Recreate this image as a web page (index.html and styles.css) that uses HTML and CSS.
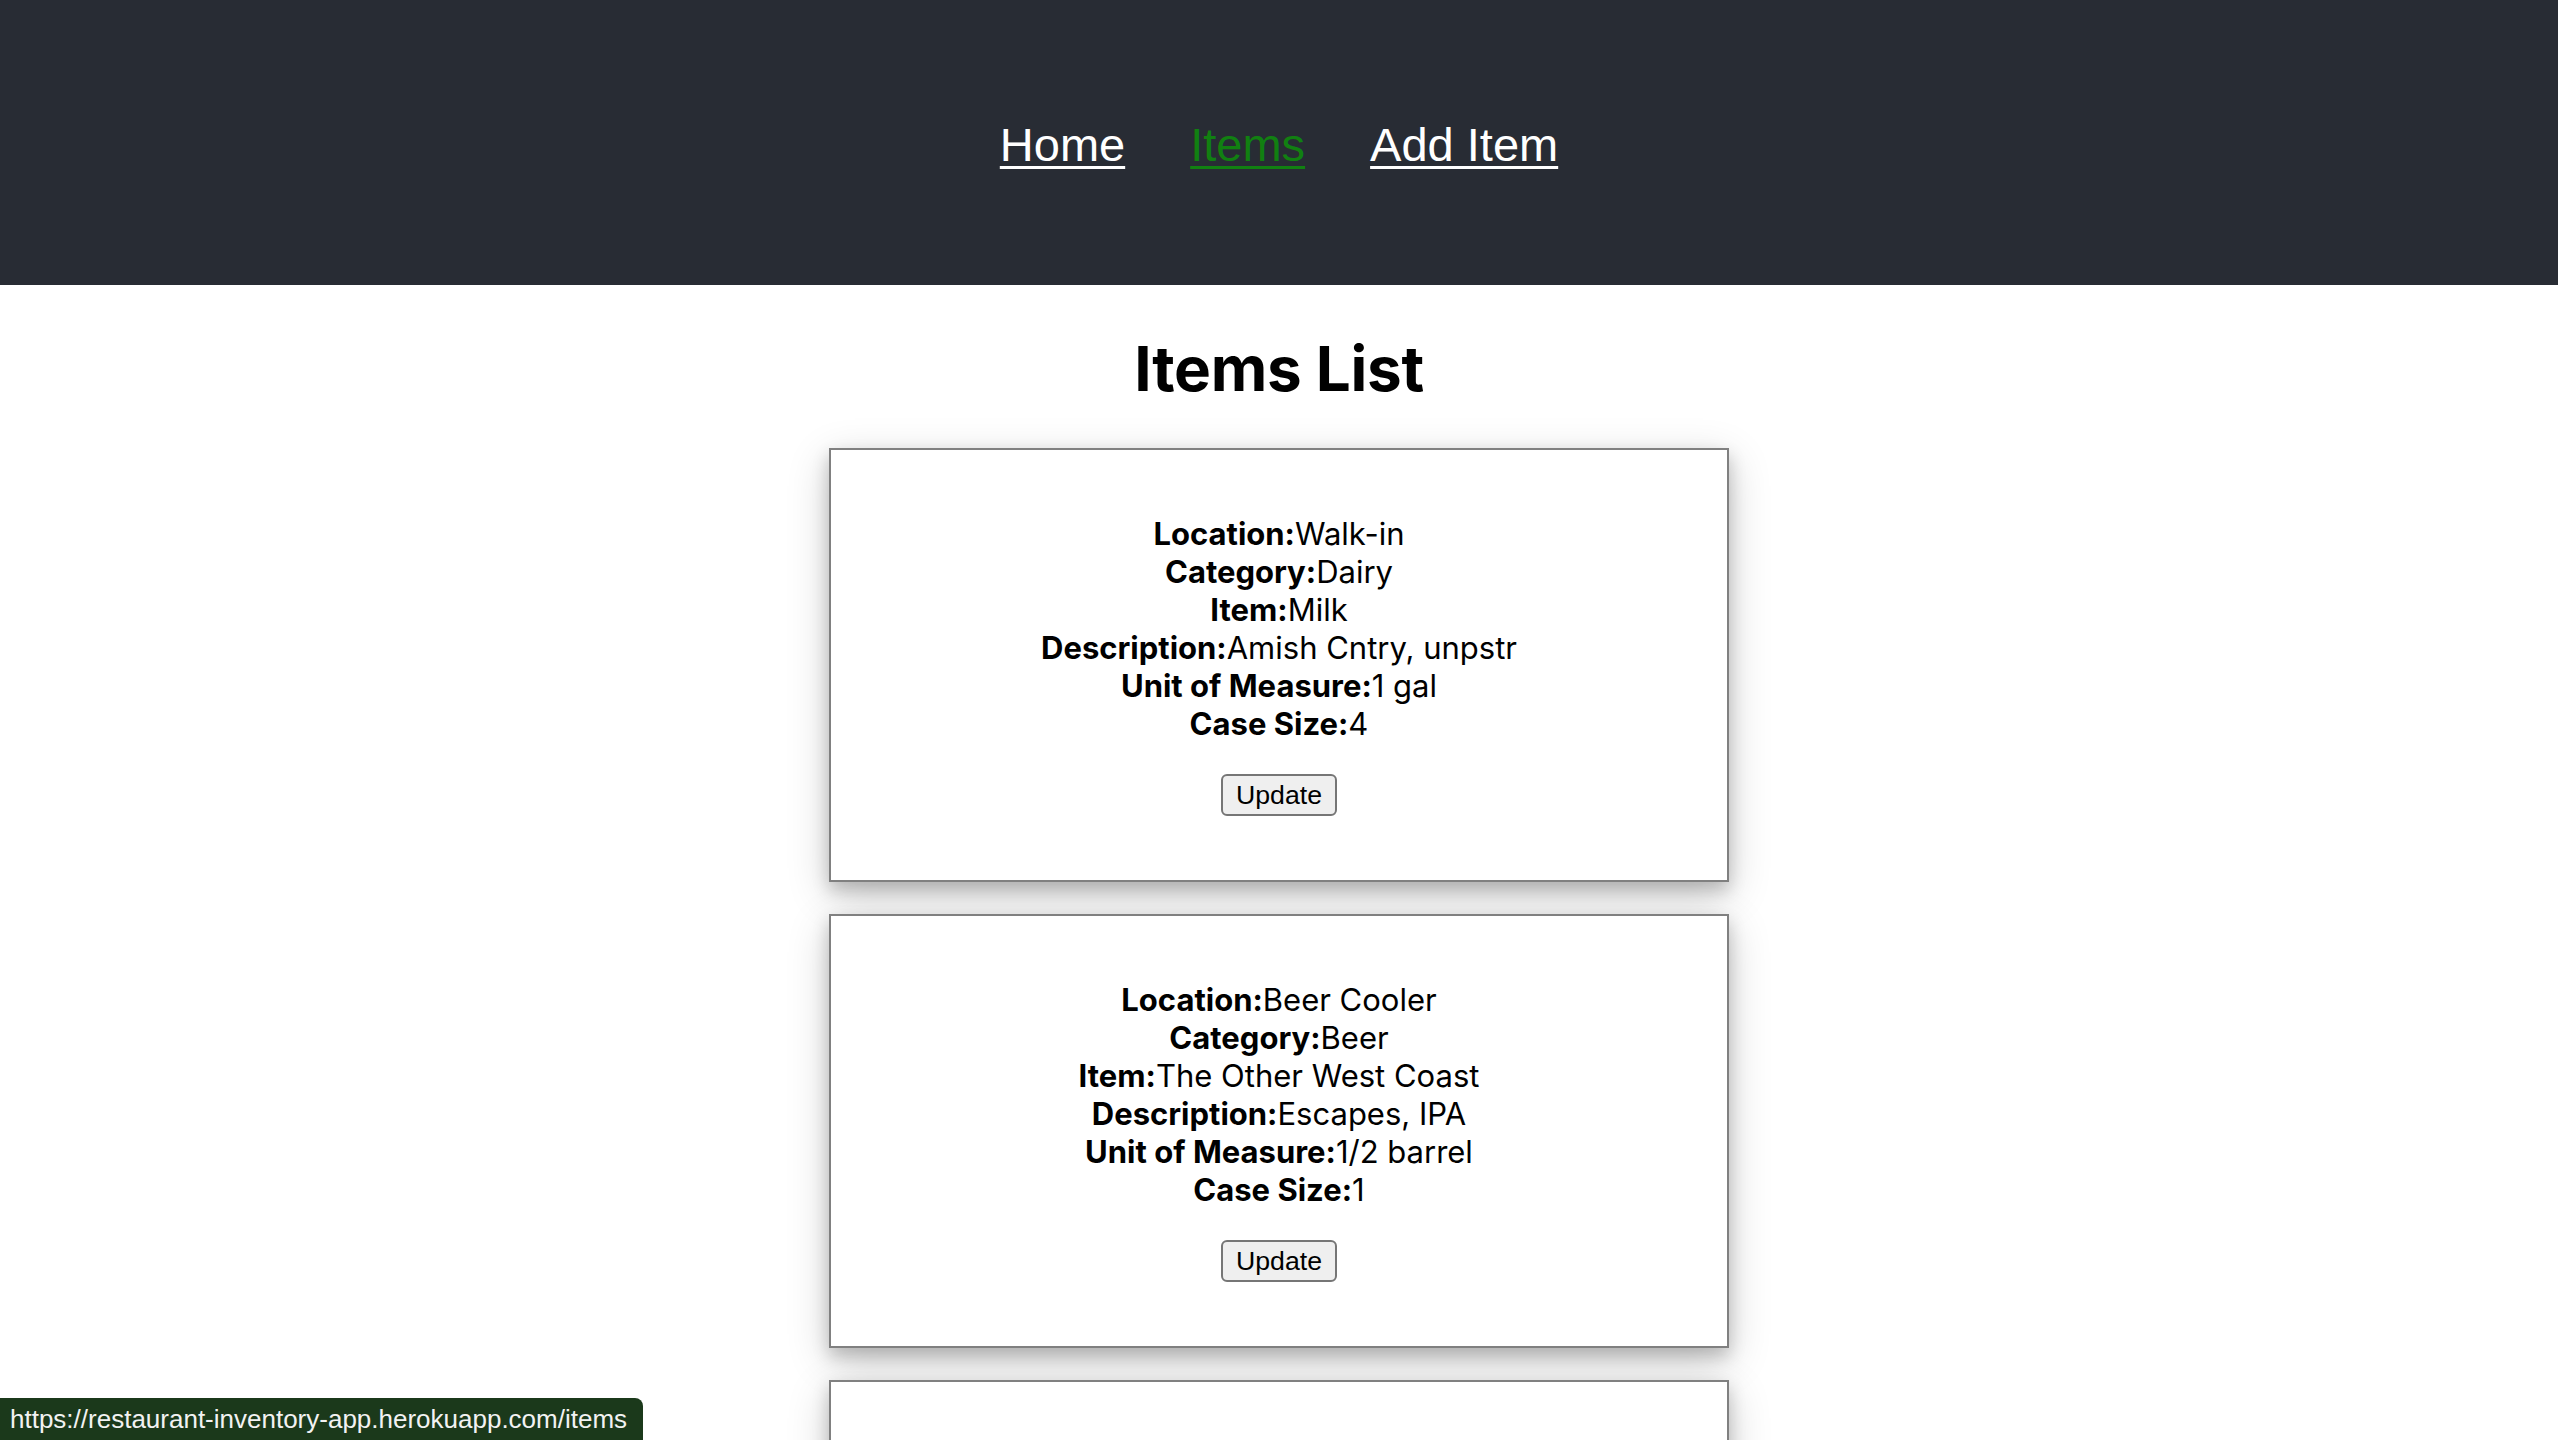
FILE: index.html
```html
<!DOCTYPE html>
<html lang="en">
<head>
<meta charset="utf-8">
<title>Restaurant Inventory</title>
<link rel="stylesheet" href="styles.css">
</head>
<body>
<header class="app-header">
  <nav class="nav">
    <a class="nav-link" href="#">Home</a>
    <a class="nav-link active" href="#">Items</a>
    <a class="nav-link" href="#">Add Item</a>
  </nav>
</header>
<main class="content">
  <h1 class="page-title">Items List</h1>
  <div class="card-list">
    <div class="card">
      <div class="row"><b>Location:</b>Walk-in</div>
      <div class="row"><b>Category:</b>Dairy</div>
      <div class="row"><b>Item:</b>Milk</div>
      <div class="row"><b>Description:</b>Amish Cntry, unpstr</div>
      <div class="row"><b>Unit of Measure:</b>1 gal</div>
      <div class="row"><b>Case Size:</b>4</div>
      <button class="btn" type="button">Update</button>
    </div>
    <div class="card">
      <div class="row"><b>Location:</b>Beer Cooler</div>
      <div class="row"><b>Category:</b>Beer</div>
      <div class="row"><b>Item:</b>The Other West Coast</div>
      <div class="row"><b>Description:</b>Escapes, IPA</div>
      <div class="row"><b>Unit of Measure:</b>1/2 barrel</div>
      <div class="row"><b>Case Size:</b>1</div>
      <button class="btn" type="button">Update</button>
    </div>
    <div class="card card-empty"></div>
  </div>
</main>
<div class="status-bubble">https://restaurant-inventory-app.herokuapp.com/items</div>
</body>
</html>
```

FILE: styles.css
```css
html, body {
  margin: 0;
  padding: 0;
  background: #ffffff;
}

body {
  font-family: Inter, "Noto Sans", sans-serif;
  color: #000000;
  overflow: hidden;
  height: 1440px;
}

.app-header {
  background: #282c34;
  height: 285px;
  display: flex;
  align-items: center;
  justify-content: center;
  box-sizing: border-box;
  padding-top: 4px;
}

.nav {
  display: flex;
  gap: 65px;
}

.nav-link {
  font-family: "Liberation Sans", Arial, sans-serif;
  font-size: 47px;
  color: #ffffff;
  text-decoration: underline;
  text-decoration-thickness: 3px;
  text-underline-offset: 5px;
}

.nav-link.active {
  color: #118011;
}

.content {
  display: flex;
  flex-direction: column;
  align-items: center;
}

.page-title {
  font-size: 62px;
  font-weight: 700;
  margin: 46px 0 42px;
  line-height: 75px;
  letter-spacing: -0.3px;
}

.card-list {
  display: flex;
  flex-direction: column;
  gap: 32px;
}

.card {
  width: 900px;
  box-sizing: border-box;
  border: 2px solid #808080;
  padding: 65px 0 64px;
  text-align: center;
  font-size: 31px;
  line-height: 38px;
  background: #ffffff;
  box-shadow: 0 8px 16px 0 rgba(0, 0, 0, 0.2), 0 12px 40px 0 rgba(0, 0, 0, 0.19);
}

.card-empty {
  height: 435px;
}

.row b {
  font-weight: 700;
}

.btn {
  margin-top: 31px;
  height: 42px;
  padding: 0 13px;
  font-family: "Liberation Sans", Arial, sans-serif;
  font-size: 26.7px;
  line-height: 30px;
  color: #000000;
  background: #efefef;
  border: 2px solid #767676;
  border-radius: 6px;
}

.status-bubble {
  position: fixed;
  left: 0;
  bottom: 0;
  width: 643px;
  height: 42px;
  box-sizing: border-box;
  padding-left: 10px;
  background: #1b391b;
  color: #f2f2f2;
  font-family: "Liberation Sans", Arial, sans-serif;
  font-size: 26px;
  line-height: 42px;
  border-top-right-radius: 8px;
  white-space: nowrap;
}
```
